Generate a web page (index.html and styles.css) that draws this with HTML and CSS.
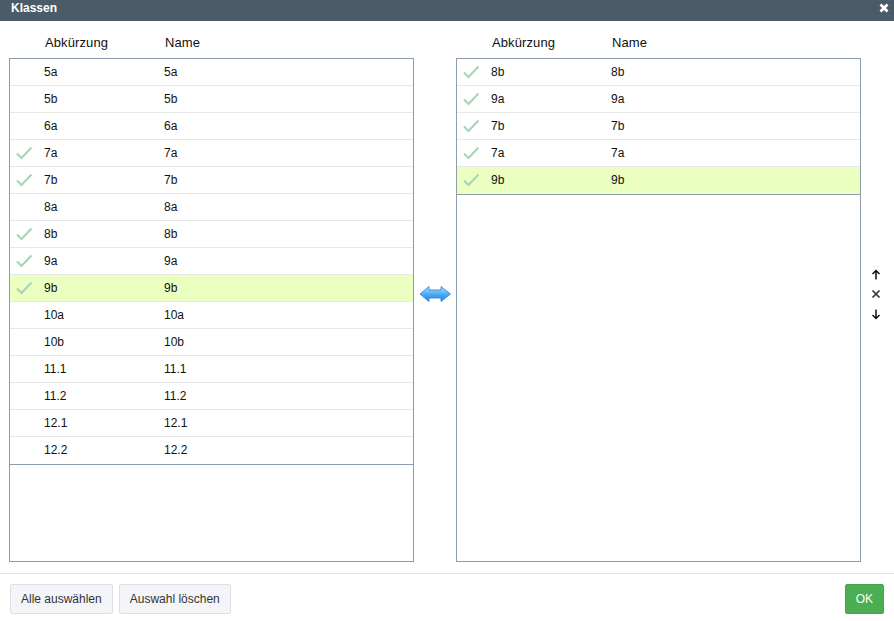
FILE: index.html
```html
<!DOCTYPE html>
<html lang="de">
<head>
<meta charset="utf-8">
<title>Klassen</title>
<link rel="stylesheet" href="styles.css">
</head>
<body>
<svg class="defs" width="0" height="0">
  <defs>
    <symbol id="check" viewBox="0 0 16 14"><path d="M1 7.5 L5.5 12 L15.5 1.5" fill="none" stroke="#a9d5b6" stroke-width="2.2"/></symbol>
    <linearGradient id="blue" x1="0" y1="0" x2="0" y2="1"><stop offset="0" stop-color="#b4e2fc"/><stop offset=".5" stop-color="#4fadf2"/><stop offset="1" stop-color="#1f80e2"/></linearGradient>
  </defs>
</svg>
<div class="dialog">
  <header class="titlebar">
    <span class="title">Klassen</span>
    <svg class="close" width="10" height="10" viewBox="0 0 10 10"><path d="M1.5 1.5 L8.5 8.5 M8.5 1.5 L1.5 8.5" stroke="#fff" stroke-width="2.8"/></svg>
  </header>
  <main class="content">
    <section class="panel">
      <div class="head"><span class="col-a">Abkürzung</span><span class="col-b">Name</span></div>
      <div class="list">
        <div class="row"><span class="mark"></span><span class="col-a">5a</span><span class="col-b">5a</span></div>
        <div class="row"><span class="mark"></span><span class="col-a">5b</span><span class="col-b">5b</span></div>
        <div class="row"><span class="mark"></span><span class="col-a">6a</span><span class="col-b">6a</span></div>
        <div class="row"><span class="mark"><svg class="check"><use href="#check"/></svg></span><span class="col-a">7a</span><span class="col-b">7a</span></div>
        <div class="row"><span class="mark"><svg class="check"><use href="#check"/></svg></span><span class="col-a">7b</span><span class="col-b">7b</span></div>
        <div class="row"><span class="mark"></span><span class="col-a">8a</span><span class="col-b">8a</span></div>
        <div class="row"><span class="mark"><svg class="check"><use href="#check"/></svg></span><span class="col-a">8b</span><span class="col-b">8b</span></div>
        <div class="row"><span class="mark"><svg class="check"><use href="#check"/></svg></span><span class="col-a">9a</span><span class="col-b">9a</span></div>
        <div class="row selected"><span class="mark"><svg class="check"><use href="#check"/></svg></span><span class="col-a">9b</span><span class="col-b">9b</span></div>
        <div class="row"><span class="mark"></span><span class="col-a">10a</span><span class="col-b">10a</span></div>
        <div class="row"><span class="mark"></span><span class="col-a">10b</span><span class="col-b">10b</span></div>
        <div class="row"><span class="mark"></span><span class="col-a">11.1</span><span class="col-b">11.1</span></div>
        <div class="row"><span class="mark"></span><span class="col-a">11.2</span><span class="col-b">11.2</span></div>
        <div class="row"><span class="mark"></span><span class="col-a">12.1</span><span class="col-b">12.1</span></div>
        <div class="row last"><span class="mark"></span><span class="col-a">12.2</span><span class="col-b">12.2</span></div>
      </div>
    </section>
    <div class="transfer">
      <svg width="34" height="20" viewBox="0 0 34 20"><path d="M2 10 L11 2.5 V6 H23 V2.5 L32.5 10 L23 17.5 V14 H11 V17.5 Z" fill="url(#blue)" stroke="#2f8ae2" stroke-width=".9"/></svg>
    </div>
    <section class="panel">
      <div class="head"><span class="col-a">Abkürzung</span><span class="col-b">Name</span></div>
      <div class="list">
        <div class="row"><span class="mark"><svg class="check"><use href="#check"/></svg></span><span class="col-a">8b</span><span class="col-b">8b</span></div>
        <div class="row"><span class="mark"><svg class="check"><use href="#check"/></svg></span><span class="col-a">9a</span><span class="col-b">9a</span></div>
        <div class="row"><span class="mark"><svg class="check"><use href="#check"/></svg></span><span class="col-a">7b</span><span class="col-b">7b</span></div>
        <div class="row"><span class="mark"><svg class="check"><use href="#check"/></svg></span><span class="col-a">7a</span><span class="col-b">7a</span></div>
        <div class="row selected last"><span class="mark"><svg class="check"><use href="#check"/></svg></span><span class="col-a">9b</span><span class="col-b">9b</span></div>
      </div>
    </section>
    <div class="order">
      <svg width="10" height="11" viewBox="0 0 10 11"><path d="M5 10.5 V1.5 M1.5 5 L5 1.5 L8.5 5" fill="none" stroke="#111" stroke-width="1.5"/></svg>
      <svg class="mid" width="10" height="10" viewBox="0 0 10 10"><path d="M1.5 1.5 L8.5 8.5 M8.5 1.5 L1.5 8.5" fill="none" stroke="#333" stroke-width="1.7"/></svg>
      <svg width="10" height="11" viewBox="0 0 10 11"><path d="M5 .5 V9.5 M1.5 6 L5 9.5 L8.5 6" fill="none" stroke="#111" stroke-width="1.5"/></svg>
    </div>
  </main>
  <footer class="footer">
    <button class="btn">Alle auswählen</button>
    <button class="btn">Auswahl löschen</button>
    <button class="btn ok">OK</button>
  </footer>
</div>
</body>
</html>
```

FILE: styles.css
```css
* { box-sizing: border-box; }
html, body { margin: 0; height: 100%; overflow: hidden; background: #fff; }
body { font-family: "Liberation Sans", Arial, sans-serif; color: #111; }
.defs { position: absolute; }
.dialog { width: 894px; height: 621px; display: flex; flex-direction: column; }
.titlebar { height: 21px; flex: none; background: #4a5c68; display: flex; align-items: center; justify-content: space-between; padding: 0 5px 5px 11px; }
.title { font-size: 12px; font-weight: bold; color: #fff; line-height: 14px; }
.close { display: block; margin-top: -1px; }
.content { flex: none; height: 553px; padding: 0 0 0 9px; display: flex; border-bottom: 1px solid #e2e2e2; }
.panel { width: 405px; flex: none; display: flex; flex-direction: column; }
.head { height: 37px; display: flex; align-items: center; padding: 6px 0 0 36px; font-size: 13px; color: #111; letter-spacing: .1px; }
.head .col-a { width: 120px; }
.list { width: 405px; height: 504px; border: 1px solid #8d9dac; }
.row { height: 27px; display: flex; align-items: center; font-size: 12px; border-bottom: 1px solid #e8e8e8; }
.row.last { height: 28px; padding-bottom: 1px; border-bottom-color: #8d9dac; }
.row.selected { background: #eaffc0; }
.mark { width: 34px; flex: none; display: flex; padding-left: 6px; }
.check { width: 16px; height: 14px; display: block; }
.row .col-a { width: 120px; flex: none; }
.transfer { width: 42px; flex: none; display: flex; justify-content: center; padding-top: 263px; }
.transfer svg { display: block; }
.order { flex: 1; display: flex; flex-direction: column; align-items: center; gap: 9px; padding: 248px 4px 0 0; }
.order svg { display: block; }
.order .mid { margin-bottom: 1px; }
.footer { flex: 1; display: flex; align-items: flex-start; gap: 6px; padding: 10px 10px 0; }
.btn { height: 30px; padding: 0 10px; font: 12px "Liberation Sans", Arial, sans-serif; color: #333; background: #f4f5f9; border: 1px solid #dcdfe4; border-radius: 2px; }
.btn.ok { margin-left: auto; background: #4cae52; border-color: #47a44d; color: #fff; }
```
